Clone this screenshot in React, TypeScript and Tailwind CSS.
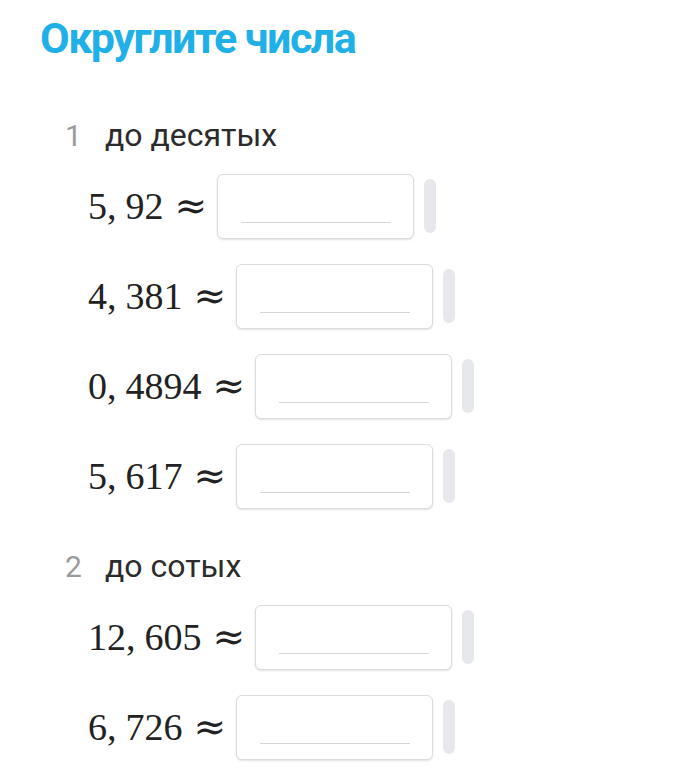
import React from 'react';

type Row = { whole: string; frac: string };

const groups: { n: number; label: string; rows: Row[] }[] = [
  {
    n: 1,
    label: 'до десятых',
    rows: [
      { whole: '5', frac: '92' },
      { whole: '4', frac: '381' },
      { whole: '0', frac: '4894' },
      { whole: '5', frac: '617' },
    ],
  },
  {
    n: 2,
    label: 'до сотых',
    rows: [
      { whole: '12', frac: '605' },
      { whole: '6', frac: '726' },
    ],
  },
];

function AnswerRow({ row }: { row: Row }) {
  return (
    <div className="flex items-center h-[90px]">
      {/* math expression */}
      <span className="flex items-center font-['Liberation_Serif','DejaVu_Serif',serif] text-[38px] leading-none text-[#222] whitespace-pre">
        <span>{row.whole},</span>
        <span className="ml-[9px]">{row.frac}</span>
        <span className="ml-[11px] font-['DejaVu_Serif',serif] text-[39px] -mt-[2px]">≈</span>
      </span>
      <div className="ml-[10px] w-[197px] h-[65px] rounded-[6px] border border-[#dcdcdc] bg-white shadow-[0_1px_2px_rgba(0,0,0,0.12)] flex items-end justify-center pb-[15px]">
        <div className="w-[150px] h-px bg-[#d6d6d6]" />
      </div>
      <div className="ml-[10px] w-[12px] h-[54px] rounded-full bg-[#e6e8eb]" />
    </div>
  );
}

export default function App() {
  return (
    <div className="w-[684px] h-[769px] bg-white overflow-hidden font-['Roboto',sans-serif]">
      <h1 className="pl-[40px] pt-[13px] text-[43px] font-bold leading-[50px] tracking-[-1.5px] text-[#1eb0e6]">
        Округлите числа
      </h1>

      <div className="mt-[48px]">
        {groups.map((g, gi) => (
          <div key={g.n} className={gi > 0 ? 'mt-[21px]' : ''}>
            <div className="flex items-baseline pl-[65px] h-[40px]">
              <span className="w-[40px] text-[30px] text-[#9a9a9a]">{g.n}</span>
              <span className="text-[32px] text-[#2b2b2b]">{g.label}</span>
            </div>
            <div className="pl-[88px] mt-[10px]">
              {g.rows.map((r) => (
                <AnswerRow key={r.whole + r.frac} row={r} />
              ))}
            </div>
          </div>
        ))}
      </div>
    </div>
  );
}
